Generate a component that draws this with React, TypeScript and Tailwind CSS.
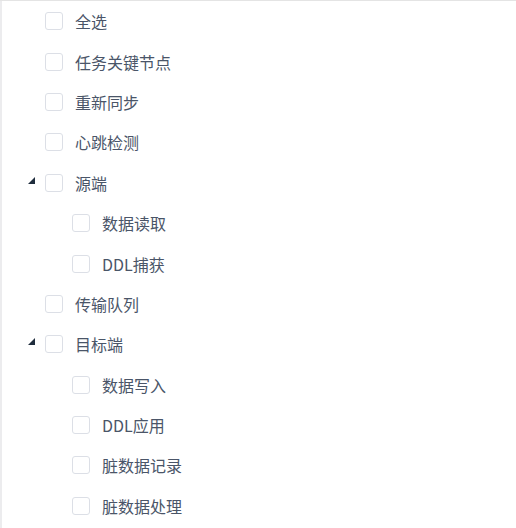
type Node = {
  label: string;
  level: number;
  expandable?: boolean;
};

const nodes: Node[] = [
  { label: "全选", level: 0 },
  { label: "任务关键节点", level: 0 },
  { label: "重新同步", level: 0 },
  { label: "心跳检测", level: 0 },
  { label: "源端", level: 0, expandable: true },
  { label: "数据读取", level: 1 },
  { label: "DDL捕获", level: 1 },
  { label: "传输队列", level: 0 },
  { label: "目标端", level: 0, expandable: true },
  { label: "数据写入", level: 1 },
  { label: "DDL应用", level: 1 },
  { label: "脏数据记录", level: 1 },
  { label: "脏数据处理", level: 1 },
];

const Row = ({ node }: { node: Node }) => (
  <div
    className={`flex items-center h-[40.4px] ${node.level === 1 ? "pl-[27px]" : "pl-0"}`}
  >
    <span className="w-[27px] flex justify-center items-center">
      {node.expandable && (
        <svg width="7" height="7" viewBox="0 0 7 7" className="-mt-[5px]">
          <polygon points="7,0 7,7 0,7" fill="#1f2d3d" />
        </svg>
      )}
    </span>
    <span className="w-[18px] h-[18px] rounded-[3px] border border-[#dcdfe6] bg-white" />
    <span className="ml-[12px] text-[16px] text-[#4a5568] leading-none">
      {node.label}
    </span>
  </div>
);

export default function App() {
  return (
    <div
      className="w-[516px] h-[528px] flex bg-white border-t border-[#e4e4e4] overflow-hidden"
      style={{ fontFamily: '"Noto Sans CJK SC", "Noto Sans", sans-serif' }}
    >
      <div className="w-[2px] bg-[#ececee]" />
      <div className="flex-1 pl-[16px]">
        {nodes.map((n, i) => (
          <Row key={i} node={n} />
        ))}
      </div>
    </div>
  );
}
